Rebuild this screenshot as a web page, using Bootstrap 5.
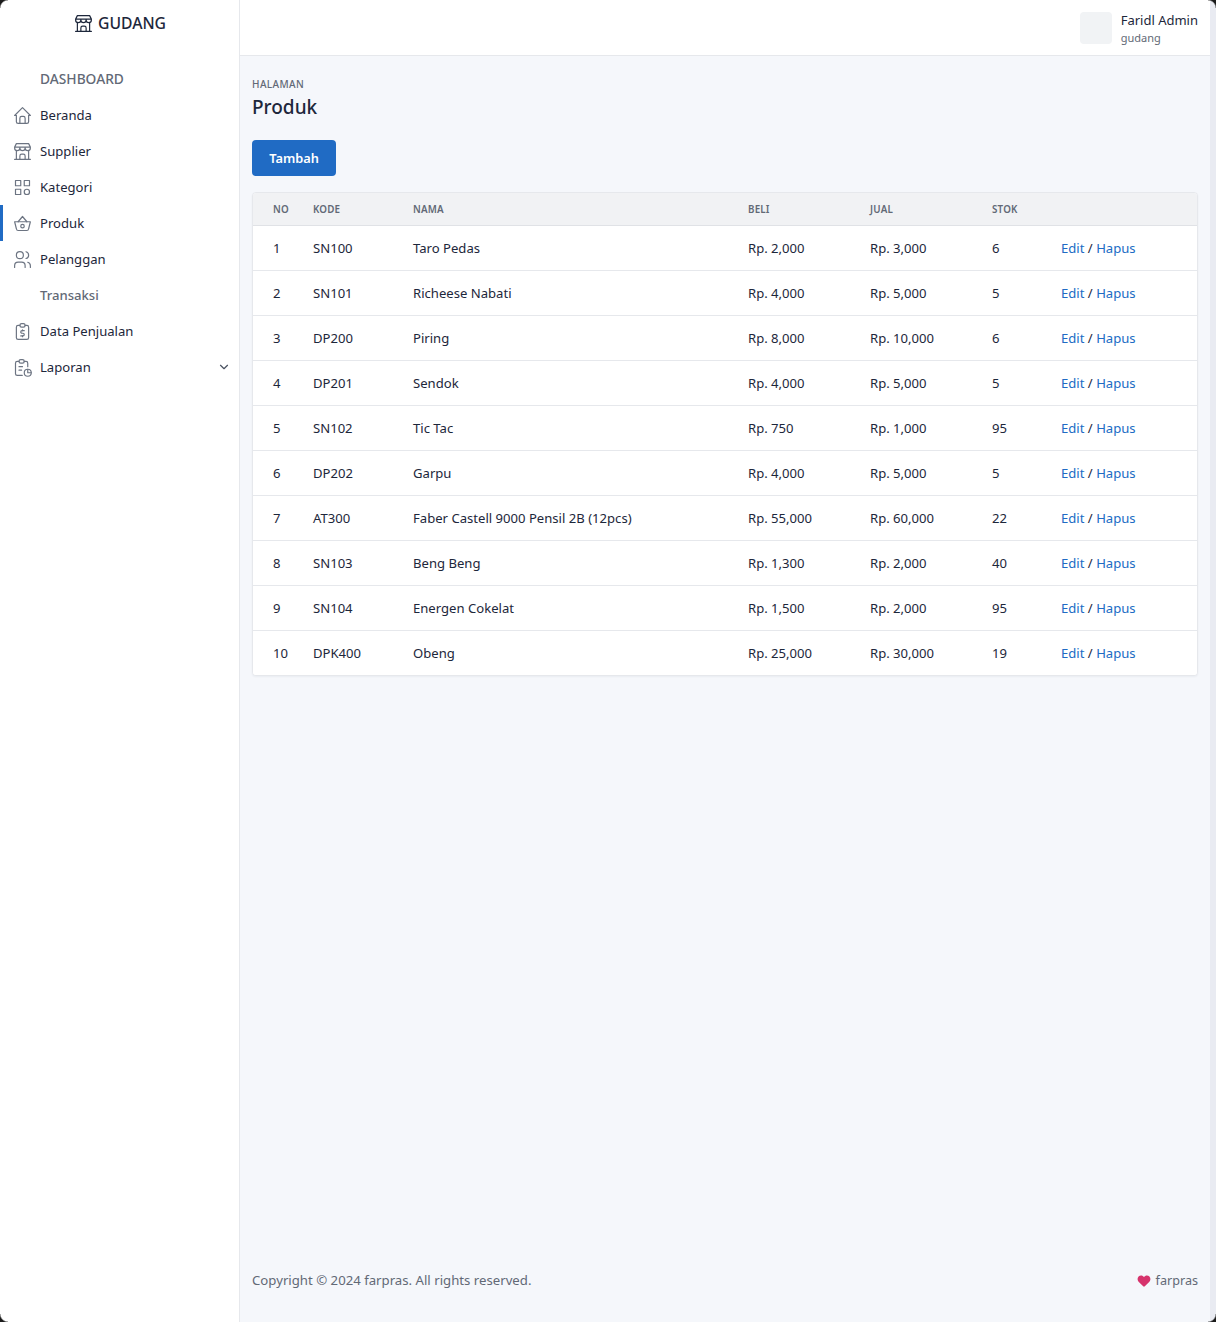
<!DOCTYPE html>
<html lang="id">
<head>
<meta charset="utf-8">
<title>Produk</title>
<link rel="stylesheet" href="https://cdn.jsdelivr.net/npm/bootstrap@5.3.0/dist/css/bootstrap.min.css">
<style>
html,body{height:100%}
body{font-family:"Noto Sans",sans-serif;font-size:13.1px;line-height:20px;color:#1d273b;background:#e9ebf2;overflow:hidden}
.shell{width:1210px;height:1322px}
.side-panel{width:240px;flex:none;background:#fff;border-right:1px solid #e6e8ec}
.brand-row{height:46px;color:#1d273b;font-size:15.7px;font-weight:500;gap:4px}
.menu-wrap{padding-top:15px}
.menu-item{height:36px;padding-left:12px;padding-right:8px;color:#1d273b;text-decoration:none;gap:7px}
.menu-item.on{box-shadow:inset 3px 0 0 #206bc4}
.menu-head{height:36px;padding-left:40px;color:#626976;font-weight:500;font-size:13.1px}
.menu-head.big{font-size:13.75px}
.ico{width:21px;height:21px;flex:none;fill:none;stroke:#6c7482;stroke-width:1.35;stroke-linecap:round;stroke-linejoin:round}
.ico-brand{stroke:#1d273b}
.ico-chev{width:14px;height:14px;stroke:#4a5261;stroke-width:2;margin-left:auto}
.main-col{background:#f5f7fb;min-width:0}
.top-strip{height:56px;background:#fff;border-bottom:1px solid #e6e8ec;padding-right:12px;gap:9px}
.avatar-box{width:32px;height:32px;background:#f1f3f5;border-radius:4px;margin-top:1px}
.user-name{font-size:13px;line-height:16px;margin-top:2px}
.user-role{font-size:11px;line-height:16px;color:#626976;margin-top:2px}
.page-body{padding:20px 12px 0}
.pre-title{font-size:10px;line-height:16px;letter-spacing:.4px;font-weight:500;color:#626976;text-transform:uppercase}
.page-name{font-size:19px;line-height:30px;font-weight:500;margin:0 0 18px}
.add-btn{height:36px;width:84px;background:#206bc4;border:0;border-radius:4px;color:#fff;font-weight:600;font-size:12.8px;padding:1px 0 0;margin-bottom:16px}
.add-btn:hover{background:#206bc4;color:#fff}
.data-card{background:#fff;border:1px solid #e6e8ec;border-radius:4px;overflow:hidden;box-shadow:0 1px 2px rgba(29,39,59,.05)}
.data-table{table-layout:fixed;width:100%;margin:0;--bs-table-color:#1d273b;color:#1d273b}
.data-table th{height:32px;background:#f1f2f4;font-size:9.8px;line-height:16px;font-weight:600;letter-spacing:.2px;color:#626976;padding:2px 0 0 20px;border-bottom:1px solid #e0e2e6;vertical-align:middle}
.data-table td{height:45px;padding:0 0 0 20px;border-bottom:1px solid #e6e8ec;vertical-align:middle;background:#fff}
.data-table tr:last-child td{border-bottom:0}
.data-table a{color:#206bc4;text-decoration:none}
.foot-row{height:84px;padding:0 12px;color:#626976;font-size:13.2px}
.foot-brand{font-size:12.6px;padding-top:1px}
.foot-row .heart{width:14px;height:14px;fill:#d6336c;margin-right:5px;flex:none}
.win-corner{position:fixed;width:8px;height:8px;pointer-events:none}
.win-tl{top:0;left:0;background:radial-gradient(circle at 100% 100%,transparent 7px,#1b1b1b 8.5px)}
.win-tr{top:0;right:0;background:radial-gradient(circle at 0 100%,transparent 7px,#1b1b1b 8.5px)}
.win-bl{bottom:0;left:0;background:radial-gradient(circle at 100% 0,transparent 7px,#1b1b1b 8.5px)}
.win-br{bottom:0;right:0;background:radial-gradient(circle at 0 0,transparent 7px,#1b1b1b 8.5px)}
</style>
</head>
<body>
<div class="shell d-flex">
  <aside class="side-panel d-flex flex-column">
    <div class="brand-row d-flex align-items-center justify-content-center">
      <svg class="ico ico-brand" viewBox="0 0 24 24"><path d="M3 21l18 0"/><path d="M3 7v1a3 3 0 0 0 6 0v-1m0 1a3 3 0 0 0 6 0v-1m0 1a3 3 0 0 0 6 0v-1h-18l2 -4h14l2 4"/><path d="M5 21l0 -10.15"/><path d="M19 21l0 -10.15"/><path d="M9 21v-4a2 2 0 0 1 2 -2h2a2 2 0 0 1 2 2v4"/></svg>
      <span>GUDANG</span>
    </div>
    <nav class="menu-wrap d-flex flex-column">
      <div class="menu-head big d-flex align-items-center">DASHBOARD</div>
      <a class="menu-item d-flex align-items-center" href="#"><svg class="ico" viewBox="0 0 24 24"><path d="M5 12l-2 0l9 -9l9 9l-2 0"/><path d="M5 12v7a2 2 0 0 0 2 2h10a2 2 0 0 0 2 -2v-7"/><path d="M9 21v-6a2 2 0 0 1 2 -2h2a2 2 0 0 1 2 2v6"/></svg>Beranda</a>
      <a class="menu-item d-flex align-items-center" href="#"><svg class="ico" viewBox="0 0 24 24"><path d="M3 21l18 0"/><path d="M3 7v1a3 3 0 0 0 6 0v-1m0 1a3 3 0 0 0 6 0v-1m0 1a3 3 0 0 0 6 0v-1h-18l2 -4h14l2 4"/><path d="M5 21l0 -10.15"/><path d="M19 21l0 -10.15"/><path d="M9 21v-4a2 2 0 0 1 2 -2h2a2 2 0 0 1 2 2v4"/></svg>Supplier</a>
      <a class="menu-item d-flex align-items-center" href="#"><svg class="ico" viewBox="0 0 24 24"><path d="M4 4h6v6h-6z"/><path d="M14 4h6v6h-6z"/><path d="M4 14h6v6h-6z"/><path d="M17 17m-3 0a3 3 0 1 0 6 0a3 3 0 1 0 -6 0"/></svg>Kategori</a>
      <a class="menu-item on d-flex align-items-center" href="#"><svg class="ico" viewBox="0 0 24 24"><path d="M7 10l5 -6l5 6"/><path d="M21 10l-2 8a2 2.5 0 0 1 -2 2h-10a2 2.5 0 0 1 -2 -2l-2 -8z"/><path d="M12 15m-2 0a2 2 0 1 0 4 0a2 2 0 1 0 -4 0"/></svg>Produk</a>
      <a class="menu-item d-flex align-items-center" href="#"><svg class="ico" viewBox="0 0 24 24"><path d="M9 7m-4 0a4 4 0 1 0 8 0a4 4 0 1 0 -8 0"/><path d="M3 21v-2a4 4 0 0 1 4 -4h4a4 4 0 0 1 4 4v2"/><path d="M16 3.13a4 4 0 0 1 0 7.75"/><path d="M21 21v-2a4 4 0 0 0 -3 -3.85"/></svg>Pelanggan</a>
      <div class="menu-head d-flex align-items-center">Transaksi</div>
      <a class="menu-item d-flex align-items-center" href="#"><svg class="ico" viewBox="0 0 24 24"><path d="M9 5h-2a2 2 0 0 0 -2 2v12a2 2 0 0 0 2 2h10a2 2 0 0 0 2 -2v-12a2 2 0 0 0 -2 -2h-2"/><path d="M9 3m0 2a2 2 0 0 1 2 -2h2a2 2 0 0 1 2 2v0a2 2 0 0 1 -2 2h-2a2 2 0 0 1 -2 -2z"/><path d="M14 11h-2.5a1.5 1.5 0 0 0 0 3h1a1.5 1.5 0 0 1 0 3h-2.5"/><path d="M12 17v1m0 -8v1"/></svg>Data Penjualan</a>
      <a class="menu-item d-flex align-items-center" href="#"><svg class="ico" viewBox="0 0 24 24"><path d="M8 5h-2a2 2 0 0 0 -2 2v12a2 2 0 0 0 2 2h5.697"/><path d="M18 14v4h4"/><path d="M18 11v-4a2 2 0 0 0 -2 -2h-2"/><path d="M8 3m0 2a2 2 0 0 1 2 -2h2a2 2 0 0 1 2 2v0a2 2 0 0 1 -2 2h-2a2 2 0 0 1 -2 -2z"/><path d="M18 18m-4 0a4 4 0 1 0 8 0a4 4 0 1 0 -8 0"/><path d="M8 11h4"/><path d="M8 15h3"/></svg>Laporan<svg class="ico ico-chev" viewBox="0 0 24 24"><path d="M6 9l6 6l6 -6"/></svg></a>
    </nav>
  </aside>
  <div class="main-col flex-grow-1 d-flex flex-column">
    <header class="top-strip d-flex align-items-center justify-content-end">
      <div class="avatar-box"></div>
      <div>
        <div class="user-name">Faridl Admin</div>
        <div class="user-role">gudang</div>
      </div>
    </header>
    <main class="page-body flex-grow-1">
      <div class="pre-title">Halaman</div>
      <h1 class="page-name">Produk</h1>
      <button type="button" class="btn add-btn">Tambah</button>
      <div class="data-card">
        <table class="table data-table">
          <colgroup><col style="width:40px"><col style="width:100px"><col style="width:335px"><col style="width:122px"><col style="width:122px"><col style="width:69px"><col></colgroup>
          <thead><tr><th>NO</th><th>KODE</th><th>NAMA</th><th>BELI</th><th>JUAL</th><th>STOK</th><th></th></tr></thead>
          <tbody>
            <tr><td>1</td><td>SN100</td><td>Taro Pedas</td><td>Rp. 2,000</td><td>Rp. 3,000</td><td>6</td><td><a href="#">Edit</a> / <a href="#">Hapus</a></td></tr>
            <tr><td>2</td><td>SN101</td><td>Richeese Nabati</td><td>Rp. 4,000</td><td>Rp. 5,000</td><td>5</td><td><a href="#">Edit</a> / <a href="#">Hapus</a></td></tr>
            <tr><td>3</td><td>DP200</td><td>Piring</td><td>Rp. 8,000</td><td>Rp. 10,000</td><td>6</td><td><a href="#">Edit</a> / <a href="#">Hapus</a></td></tr>
            <tr><td>4</td><td>DP201</td><td>Sendok</td><td>Rp. 4,000</td><td>Rp. 5,000</td><td>5</td><td><a href="#">Edit</a> / <a href="#">Hapus</a></td></tr>
            <tr><td>5</td><td>SN102</td><td>Tic Tac</td><td>Rp. 750</td><td>Rp. 1,000</td><td>95</td><td><a href="#">Edit</a> / <a href="#">Hapus</a></td></tr>
            <tr><td>6</td><td>DP202</td><td>Garpu</td><td>Rp. 4,000</td><td>Rp. 5,000</td><td>5</td><td><a href="#">Edit</a> / <a href="#">Hapus</a></td></tr>
            <tr><td>7</td><td>AT300</td><td>Faber Castell 9000 Pensil 2B (12pcs)</td><td>Rp. 55,000</td><td>Rp. 60,000</td><td>22</td><td><a href="#">Edit</a> / <a href="#">Hapus</a></td></tr>
            <tr><td>8</td><td>SN103</td><td>Beng Beng</td><td>Rp. 1,300</td><td>Rp. 2,000</td><td>40</td><td><a href="#">Edit</a> / <a href="#">Hapus</a></td></tr>
            <tr><td>9</td><td>SN104</td><td>Energen Cokelat</td><td>Rp. 1,500</td><td>Rp. 2,000</td><td>95</td><td><a href="#">Edit</a> / <a href="#">Hapus</a></td></tr>
            <tr><td>10</td><td>DPK400</td><td>Obeng</td><td>Rp. 25,000</td><td>Rp. 30,000</td><td>19</td><td><a href="#">Edit</a> / <a href="#">Hapus</a></td></tr>
          </tbody>
        </table>
      </div>
    </main>
    <footer class="foot-row d-flex align-items-center justify-content-between">
      <span>Copyright © 2024 farpras. All rights reserved.</span>
      <span class="foot-brand d-flex align-items-center"><svg class="heart" viewBox="0 0 24 24"><path d="M6.98 2.5C3.6 2.5 1 5.2 1 8.6c0 2.4 1.2 4.3 3 6.1l6.6 6.5a2 2 0 0 0 2.8 0l6.6-6.5c1.8-1.8 3-3.7 3-6.1 0-3.4-2.6-6.1-6-6.1-2 0-3.8 1-5 2.7-1.2-1.7-3-2.7-5-2.7z"/></svg>farpras</span>
    </footer>
  </div>
</div>
<div class="win-corner win-tl"></div>
<div class="win-corner win-tr"></div>
<div class="win-corner win-bl"></div>
<div class="win-corner win-br"></div>
</body>
</html>
